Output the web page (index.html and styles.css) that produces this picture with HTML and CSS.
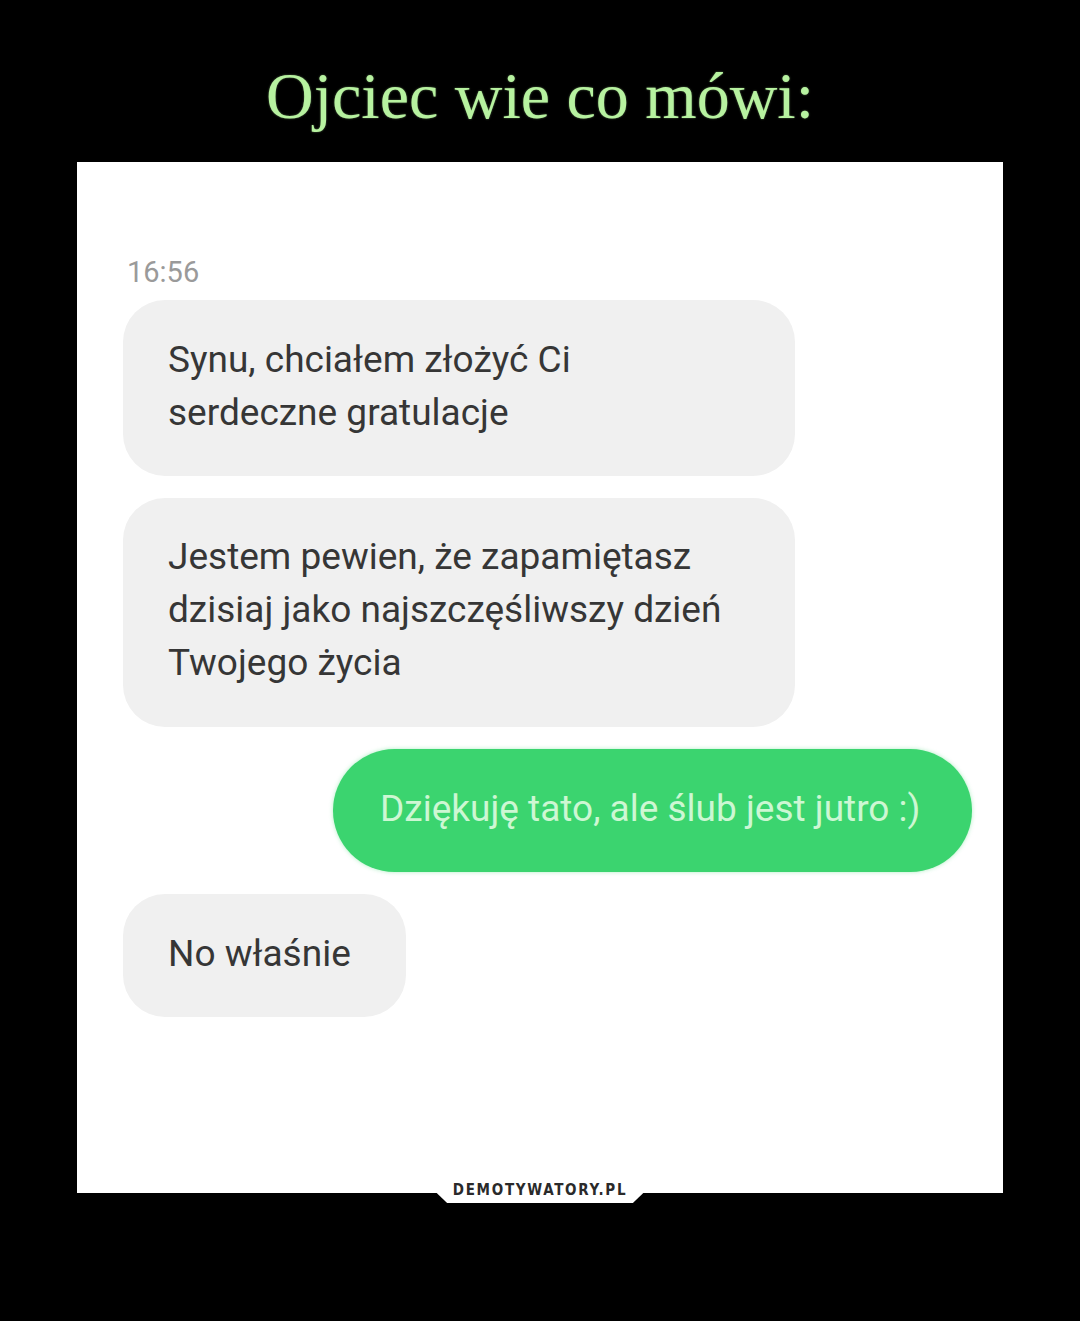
FILE: index.html
```html
<!DOCTYPE html>
<html lang="pl">
<head>
<meta charset="utf-8">
<title>Ojciec wie co mówi</title>
<link rel="stylesheet" href="styles.css">
</head>
<body>
<div class="page">
  <h1 class="title">Ojciec wie co mówi:</h1>
  <div class="panel">
    <div class="time">16:56</div>
    <div class="chat">
      <div class="bubble in b1">Synu, chciałem złożyć Ci<br>serdeczne gratulacje</div>
      <div class="bubble in b2">Jestem pewien, że zapamiętasz<br>dzisiaj jako najszczęśliwszy dzień<br>Twojego życia</div>
      <div class="bubble out">Dziękuję tato, ale ślub jest jutro :)</div>
      <div class="bubble in b4">No właśnie</div>
    </div>
    <div class="badge">DEMOTYWATORY.PL</div>
  </div>
</div>
</body>
</html>
```
FILE: styles.css
```css
html, body {
  margin: 0;
  padding: 0;
  background: #000;
}
.page {
  width: 1080px;
  height: 1321px;
  background: #000;
  display: flex;
  flex-direction: column;
}
.title {
  margin: 0;
  height: 162px;
  box-sizing: border-box;
  padding-top: 58px;
  text-align: center;
  font-family: "Liberation Serif", "Times New Roman", serif;
  font-weight: normal;
  font-size: 66px;
  line-height: 76px;
  color: #b7f2a0;
  text-shadow: 0 0 2px rgba(183, 242, 160, 0.5);
}
.panel {
  position: relative;
  margin: 0 77px;
  height: 1031px;
  background: #fff;
  box-sizing: border-box;
  padding: 92px 31px 0 46px;
}
.time {
  font-family: Roboto, "Noto Sans", sans-serif;
  font-size: 29px;
  line-height: 36px;
  color: #9a9a9a;
  padding-left: 4px;
}
.chat {
  margin-top: 10px;
  display: flex;
  flex-direction: column;
  gap: 22px;
}
.bubble {
  font-family: Roboto, "Noto Sans", sans-serif;
  font-size: 37px;
  line-height: 53px;
  box-sizing: border-box;
}
.in {
  background: #f0f0f0;
  color: #363636;
  border-radius: 42px;
  align-self: flex-start;
  padding: 33px 45px 37px;
}
.b1, .b2 {
  width: 672px;
}
.b2 {
  padding-top: 32px;
  padding-bottom: 38px;
}
.b4 {
  width: 283px;
}
.out {
  align-self: flex-end;
  width: 639px;
  background: #3bd46f;
  color: #cdf7d3;
  border-radius: 62px;
  padding: 33px 40px 37px 47px;
  white-space: nowrap;
  box-shadow: 0 0 4px rgba(59, 212, 111, 0.4);
}
.badge {
  position: absolute;
  left: 50%;
  bottom: -10px;
  transform: translateX(-50%);
  width: 216px;
  height: 24px;
  background: #fff;
  clip-path: polygon(0 0, 100% 0, 100% 40%, 93% 100%, 7% 100%, 0 40%);
  text-align: center;
  font-family: "DejaVu Sans Condensed", "DejaVu Sans", sans-serif;
  font-weight: bold;
  font-size: 15px;
  line-height: 22px;
  letter-spacing: 1.7px;
  color: #2a2a2a;
}
```
